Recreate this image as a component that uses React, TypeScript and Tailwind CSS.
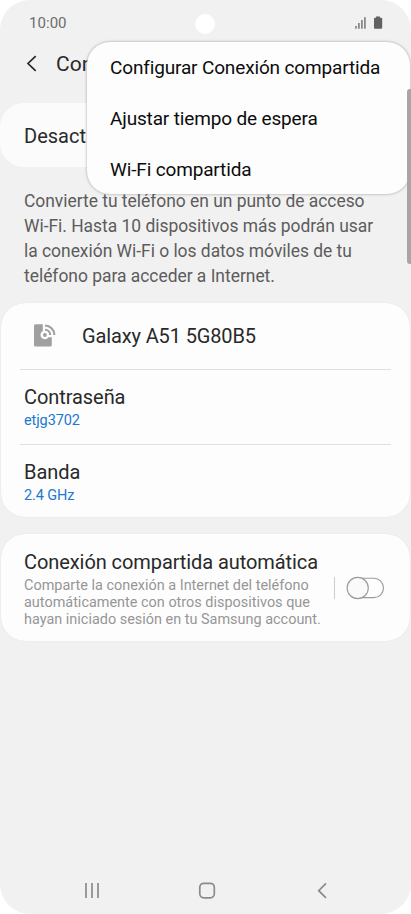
import React from "react";

function StatusBar() {
  return (
    <header className="grid h-[41px] shrink-0 grid-cols-[195px_20px_1fr] pt-[13px]">
      <span className="pl-[29px] text-[15px] leading-[21px] tracking-[0.05px] text-[#6c6c6c]">10:00</span>
      <span className="mt-[0.5px] h-[20px] w-[20px] rounded-full bg-white" />
      <div className="flex justify-end pr-[28px]">
        <svg width="28" height="20" viewBox="355 13 28 20" fill="#626262">
          <g opacity="0.8">
            <rect x="355.2" y="26" width="1.6" height="2.7" />
            <rect x="358.1" y="23" width="1.6" height="5.7" />
            <rect x="361.1" y="20" width="1.6" height="8.7" />
            <rect x="364.1" y="17.2" width="1.6" height="11.5" />
          </g>
          <path d="M376 16.4h4v1.3h1.2q1 0 1 1v9.1q0 1-1 1h-6.2q-1 0-1-1v-9.1q0-1 1-1h1z" />
        </svg>
      </div>
    </header>
  );
}

function Menu() {
  const items = ["Configurar Conexión compartida", "Ajustar tiempo de espera", "Wi-Fi compartida"];
  return (
    <div className="absolute top-[42px] left-[87px] h-[152px] w-[323px] rounded-[23px] bg-[#fdfdfd] pt-px pl-[23px] shadow-[0_0_3px_rgba(0,0,0,0.35)]">
      {items.map((label) => (
        <div key={label} className="flex h-[51px] items-center text-[19px] tracking-[-0.15px] whitespace-nowrap text-[#0c0c0c]">
          {label}
        </div>
      ))}
    </div>
  );
}

function Setting({ title, value }: { title: string; value: string }) {
  return (
    <div className="mx-[19px] h-[74.5px] border-t border-[#e0e0e0] px-1 pt-[14px]">
      <div className="text-[20px] leading-[26px] tracking-[-0.07px] text-[#292929]">{title}</div>
      <div className="text-[14.5px] leading-[21px] tracking-[-0.1px] text-[#1b78cf]">{value}</div>
    </div>
  );
}

export default function App() {
  return (
    <div className="h-[914px] w-[411px] overflow-hidden bg-white font-[Roboto,sans-serif]">
      <div className="relative flex h-full flex-col overflow-hidden rounded-[30px] bg-[#f1f1f1]">
        <StatusBar />

        <div className="flex h-[62px] shrink-0 items-start pt-[10px] pl-[24px]">
          <svg className="mt-[4px]" width="16" height="18" viewBox="24 55 16 18" fill="none" stroke="#292929" strokeWidth="1.7">
            <path d="M35.7 56.2 28 63.5l7.7 7.4" />
          </svg>
          <h1 className="ml-[16px] w-[32px] overflow-hidden text-[21px] leading-[27px] whitespace-nowrap text-[#292929]">Con</h1>
        </div>

        <div className="flex h-[64px] shrink-0 items-center rounded-[24px] bg-[#fbfbfb] pt-[2px] pl-[24px] text-[20px] text-[#292929]">
          Desact
        </div>

        <p className="mt-[21px] h-[100px] shrink-0 pt-px pl-[24px] text-[17.45px] leading-[25px] tracking-[-0.02px] whitespace-nowrap text-[#5c5c5c]">
          Convierte tu teléfono en un punto de acceso<br />
          Wi-Fi. Hasta 10 dispositivos más podrán usar<br />
          la conexión Wi-Fi o los datos móviles de tu<br />
          teléfono para acceder a Internet.
        </p>

        <section className="mx-px mt-[15px] h-[214px] shrink-0 rounded-[24px] bg-[#fdfdfd] shadow-[0_0_1px_rgba(0,0,0,0.12)]">
          <div className="flex h-[66px] items-center">
            <svg className="mb-[2px] ml-[33px]" width="22" height="23" viewBox="34 324.5 22 23">
              <path fill="#a0a0a0" d="M35.5 324.7H42.8v6.9a4.3 4.3 0 1 0 5.6 6.1h3.4v7.7q0 1.5-1.5 1.5H35.5q-1.5 0-1.5-1.5v-19.2q0-1.5 1.5-1.5z" />
              <circle cx="44.9" cy="335.5" r="1.9" fill="#a0a0a0" />
              <path d="M45 330.3a5.3 5.3 0 0 1 5.2 5.2M45 326a9.6 9.6 0 0 1 9.4 9.5" fill="none" stroke="#a0a0a0" strokeWidth="2.1" />
            </svg>
            <span className="ml-[26px] text-[20px] tracking-[-0.13px] text-[#292929]">Galaxy A51 5G80B5</span>
          </div>
          <Setting title="Contraseña" value="etjg3702" />
          <Setting title="Banda" value="2.4 GHz" />
        </section>

        <section className="mx-px mt-[17px] flex h-[107px] shrink-0 rounded-[24px] bg-[#fdfdfd] pl-[23px] shadow-[0_0_1px_rgba(0,0,0,0.12)]">
          <div className="w-[310px] pt-[14px] whitespace-nowrap">
            <h2 className="text-[20px] leading-[28px] tracking-[-0.08px] text-[#292929]">Conexión compartida automática</h2>
            <p className="pt-px text-[14.45px] leading-[17px] text-[#969696]">
              Comparte la conexión a Internet del teléfono<br />
              automáticamente con otros dispositivos que<br />
              hayan iniciado sesión en tu Samsung account.
            </p>
          </div>
          <span className="mt-[43px] h-[22px] w-px bg-[#cccccc]" />
          <svg className="mt-[42px] ml-[11px]" width="40" height="24" viewBox="346 576 40 24" fill="#fdfdfd" stroke="#9b9b9b" strokeWidth="1.1">
            <rect x="348" y="578.3" width="35.5" height="19.3" rx="9.6" />
            <circle cx="357.7" cy="588" r="10.6" fill="#fafafa" />
          </svg>
        </section>

        <nav className="mt-auto flex h-[46px] shrink-0 items-center">
          <svg width="411" height="46" viewBox="0 868 411 46" fill="none" stroke="#8b8b8b" strokeWidth="1.7">
            <path d="M86 883v15M92 883v15M98 883v15" />
            <rect x="199.8" y="883.3" width="14.5" height="14.5" rx="4" />
            <path d="M326 883.4l-7.3 7.3 7.3 7.2" />
          </svg>
        </nav>

        <Menu />
        <div className="absolute top-[89px] left-[407px] h-[175px] w-[6px] rounded-[3px] bg-[#a6a6a6]" />
      </div>
    </div>
  );
}
